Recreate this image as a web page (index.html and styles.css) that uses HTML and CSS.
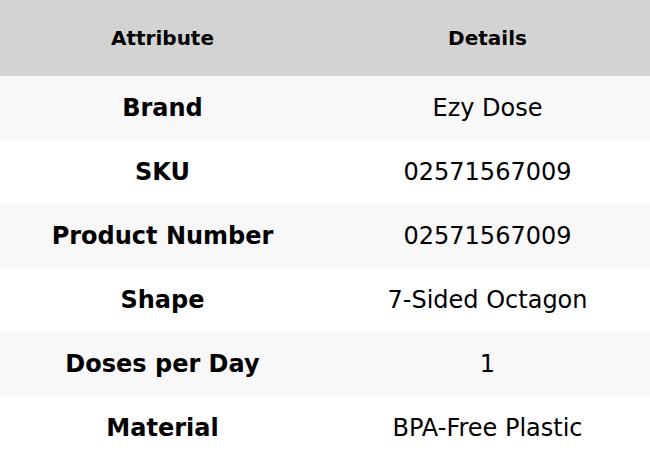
FILE: index.html
```html
<!DOCTYPE html>
<html>
<head>
<meta charset="utf-8">
<link rel="stylesheet" href="styles.css">
</head>
<body>
<table class="spec-table">
  <thead>
    <tr><th>Attribute</th><th>Details</th></tr>
  </thead>
  <tbody>
    <tr><td class="attr">Brand</td><td>Ezy Dose</td></tr>
    <tr><td class="attr">SKU</td><td>02571567009</td></tr>
    <tr><td class="attr">Product Number</td><td>02571567009</td></tr>
    <tr><td class="attr">Shape</td><td>7-Sided Octagon</td></tr>
    <tr><td class="attr">Doses per Day</td><td>1</td></tr>
    <tr><td class="attr">Material</td><td>BPA-Free Plastic</td></tr>
  </tbody>
</table>
</body>
</html>
```
FILE: styles.css
```css
html, body {
  margin: 0;
  padding: 0;
  background: #ffffff;
}
body {
  font-family: "DejaVu Sans", sans-serif;
  color: #000;
}
.spec-table {
  width: 650px;
  border-collapse: collapse;
  table-layout: fixed;
}
.spec-table th {
  background: #d3d3d3;
  height: 76px;
  padding: 0;
  font-size: 20px;
  font-weight: bold;
  text-align: center;
  vertical-align: middle;
}
.spec-table td {
  height: 64px;
  padding: 0;
  font-size: 24px;
  text-align: center;
  vertical-align: middle;
}
.spec-table td.attr {
  font-weight: bold;
}
.spec-table tbody tr:nth-child(odd) {
  background: #f8f8f8;
}
```
